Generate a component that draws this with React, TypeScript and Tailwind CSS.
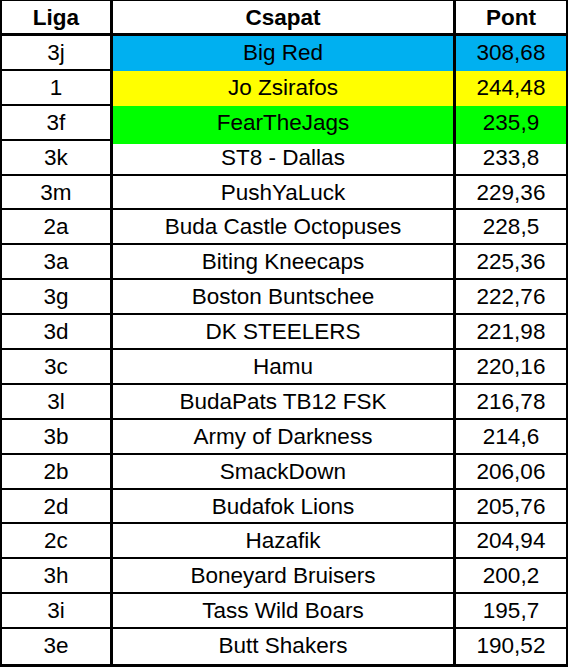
import React from 'react';

// Ranking rows, in screenshot order
const rows: Row[] = [
  { liga: '3j', team: 'Big Red', pont: '308,68', bg: 'bg-[#00b0f0]' },
  { liga: '1', team: 'Jo Zsirafos', pont: '244,48', bg: 'bg-[#ffff00]' },
  { liga: '3f', team: 'FearTheJags', pont: '235,9', bg: 'bg-[#00ff00]' },
  { liga: '3k', team: 'ST8 - Dallas', pont: '233,8' },
  { liga: '3m', team: 'PushYaLuck', pont: '229,36' },
  { liga: '2a', team: 'Buda Castle Octopuses', pont: '228,5' },
  { liga: '3a', team: 'Biting Kneecaps', pont: '225,36' },
  { liga: '3g', team: 'Boston Buntschee', pont: '222,76' },
  { liga: '3d', team: 'DK STEELERS', pont: '221,98' },
  { liga: '3c', team: 'Hamu', pont: '220,16' },
  { liga: '3l', team: 'BudaPats TB12 FSK', pont: '216,78' },
  { liga: '3b', team: 'Army of Darkness', pont: '214,6' },
  { liga: '2b', team: 'SmackDown', pont: '206,06' },
  { liga: '2d', team: 'Budafok Lions', pont: '205,76' },
  { liga: '2c', team: 'Hazafik', pont: '204,94' },
  { liga: '3h', team: 'Boneyard Bruisers', pont: '200,2' },
  { liga: '3i', team: 'Tass Wild Boars', pont: '195,7' },
  { liga: '3e', team: 'Butt Shakers', pont: '190,52' },
];

const cell = 'flex items-center justify-center pb-[4px] whitespace-nowrap';

const App: React.FC = () => (
  <div className="h-[669px] w-[569px] bg-white font-['Liberation_Sans',Arial,sans-serif] text-[22.5px] text-black">
    <div className="w-[568px] border-b-[3px] border-l-2 border-r-2 border-t border-black">
      {/* header */}
      <div className="grid h-[35px] grid-cols-[111px_343px_110px] border-b-[3px] border-black font-bold">
        <div className={`${cell} border-r-[3px] border-black`}>Liga</div>
        <div className={`${cell} border-r-[3px] border-black`}>Csapat</div>
        <div className={cell}>Pont</div>
      </div>
      {rows.map((r, i) => (
        <div
          key={r.liga}
          className={`grid h-[34.9px] grid-cols-[111px_343px_110px] border-black ${i < rows.length - 1 ? 'border-b-2' : ''}`}
        >
          <div className={`${cell} border-r-[3px] border-black`}>{r.liga}</div>
          <div className={`${cell} border-r-[3px] border-black ${r.bg ?? ''}`}>{r.team}</div>
          <div className={`${cell} ${r.bg ?? ''}`}>{r.pont}</div>
        </div>
      ))}
    </div>
  </div>
);

export default App;

interface Row { liga: string; team: string; pont: string; bg?: string; }
